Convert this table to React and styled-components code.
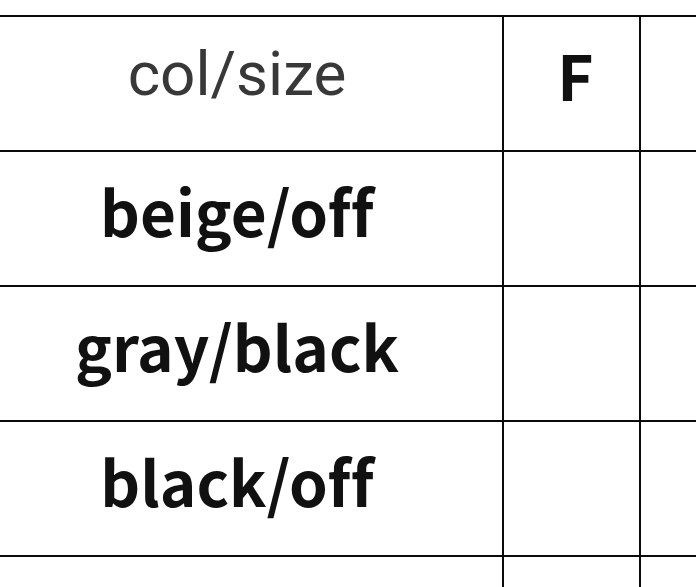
import React from "react";
import styled, { createGlobalStyle } from "styled-components";

const Global = createGlobalStyle`
  html, body { margin: 0; padding: 0; background: #ffffff; overflow: hidden; }
  body { font-family: "Noto Sans CJK JP", "Noto Sans", sans-serif; }
`;

const Page = styled.div`
  width: 696px;
  height: 587px;
  overflow: hidden;
  background: #fff;
`;

const Grid = styled.div`
  display: grid;
  grid-template-columns: 532px 137px 200px;
  margin: 15px 0 0 -28px;
  border-top: 2px solid #0a0a0a;
  width: max-content;
`;

const Cell = styled.div`
  box-sizing: border-box;
  height: 135px;
  border-right: 2px solid #0a0a0a;
  border-bottom: 2px solid #0a0a0a;
  display: flex;
  align-items: center;
  justify-content: center;
  padding-bottom: ${(p) => (p.$head ? "20px" : "18px")};
  padding-left: ${(p) => p.$shift || "0"};
  font-family: ${(p) =>
    p.$light ? '"Roboto", "Noto Sans", sans-serif' : '"Noto Sans CJK JP", "Noto Sans", sans-serif'};
  font-weight: ${(p) => (p.$light ? 400 : 700)};
  font-size: ${(p) => (p.$light ? "62px" : "62px")};
  color: ${(p) => (p.$light ? "#383838" : "#111")};
  line-height: 1;
  white-space: nowrap;
  font-variant-ligatures: none;
  font-feature-settings: "liga" 0;
`;

const rows = ["beige/off", "gray/black", "black/off", ""];

export default function App() {
  return (
    <Page>
      <Global />
      <Grid>
        <Cell $head $light>col/size</Cell>
        <Cell $head $shift="8px">F</Cell>
        <Cell $head />
        {rows.map((r, i) => (
          <React.Fragment key={i}>
            <Cell>{r}</Cell>
            <Cell />
            <Cell />
          </React.Fragment>
        ))}
      </Grid>
    </Page>
  );
}
